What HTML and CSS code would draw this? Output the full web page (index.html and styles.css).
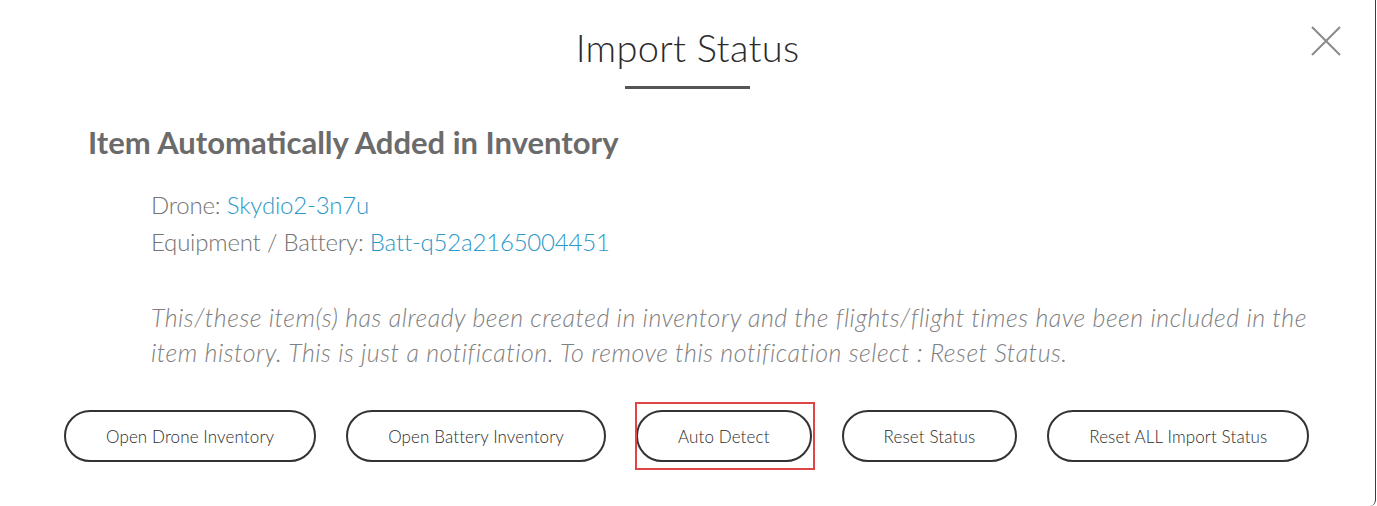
FILE: index.html
```html
<!DOCTYPE html>
<html lang="en">
<head>
<meta charset="utf-8">
<title>Import Status</title>
<link rel="stylesheet" href="styles.css">
</head>
<body>
<div class="modal">
  <button class="close" aria-label="Close">
    <svg width="30" height="30" viewBox="0 0 30 30"><path d="M1 1 L29 29 M29 1 L1 29" stroke="#8a8a8a" stroke-width="2" fill="none"/></svg>
  </button>
  <header class="head">
    <h1 class="title">Import Status</h1>
    <div class="rule"></div>
  </header>
  <section class="content">
    <h2 class="heading">Item Automatically Added in Inventory</h2>
    <div class="items">
      <div class="line">Drone: <a class="link" href="#">Skydio2-3n7u</a></div>
      <div class="line">Equipment / Battery: <a class="link" href="#">Batt-q52a2165004451</a></div>
    </div>
    <p class="note">This/these item(s) has already been created in inventory and the flights/flight times have been included in the item history. This is just a notification. To remove this notification select : Reset Status.</p>
  </section>
  <div class="actions">
    <button class="btn">Open Drone Inventory</button>
    <button class="btn">Open Battery Inventory</button>
    <button class="btn btn-marked">Auto Detect</button>
    <button class="btn">Reset Status</button>
    <button class="btn">Reset ALL Import Status</button>
  </div>
</div>
</body>
</html>
```
FILE: styles.css
```css
html, body {
  margin: 0;
  padding: 0;
  background: #ffffff;
}
body {
  font-family: Lato, "Open Sans", "Liberation Sans", sans-serif;
  width: 1377px;
  height: 506px;
  overflow: hidden;
}
.modal {
  position: relative;
  box-sizing: border-box;
  width: 1376px;
  height: 506px;
  border-right: 1px solid #3c3c3c;
  border-bottom-right-radius: 6px;
  background: #fff;
}
.close {
  position: absolute;
  top: 26px;
  right: 34px;
  width: 30px;
  height: 30px;
  padding: 0;
  border: 0;
  background: transparent;
  display: flex;
}
.head {
  padding-top: 24px;
  display: flex;
  flex-direction: column;
  align-items: center;
}
.title {
  margin: 0;
  font-size: 38px;
  font-weight: 300;
  line-height: 46px;
  color: #2b2b2b;
  letter-spacing: 0.3px;
}
.rule {
  margin-top: 16px;
  width: 125px;
  height: 3px;
  background: #555555;
}
.content {
  padding-left: 88px;
}
.heading {
  margin: 35px 0 0 0;
  font-size: 31px;
  line-height: 36px;
  font-weight: 700;
  color: #6b6b6b;
  letter-spacing: 0;
}
.items {
  margin-top: 26px;
  padding-left: 63px;
}
.line {
  font-size: 24px;
  line-height: 37px;
  font-weight: 300;
  color: #737373;
  letter-spacing: -0.2px;
}
.link {
  color: #2b98c9;
  text-decoration: none;
}
.note {
  margin: 40px 0 0 0;
  padding-left: 63px;
  width: 1190px;
  font-size: 25px;
  line-height: 35px;
  font-weight: 300;
  font-style: italic;
  color: #808080;
  letter-spacing: 0.5px;
}
.actions {
  display: flex;
  gap: 30px;
  padding-left: 64px;
  margin-top: 40px;
}
.btn {
  position: relative;
  box-sizing: border-box;
  height: 52px;
  padding: 0 40px;
  border: 2px solid #333333;
  border-radius: 26px;
  background: #fff;
  font-family: Lato, "Open Sans", "Liberation Sans", sans-serif;
  font-size: 17px;
  font-weight: 300;
  color: #2b2b2b;
  letter-spacing: 0.12px;
  white-space: nowrap;
}
.btn-marked::after {
  content: "";
  position: absolute;
  top: -10px;
  bottom: -10px;
  left: -3px;
  right: -5px;
  border: 2px solid #e04545;
}
```
